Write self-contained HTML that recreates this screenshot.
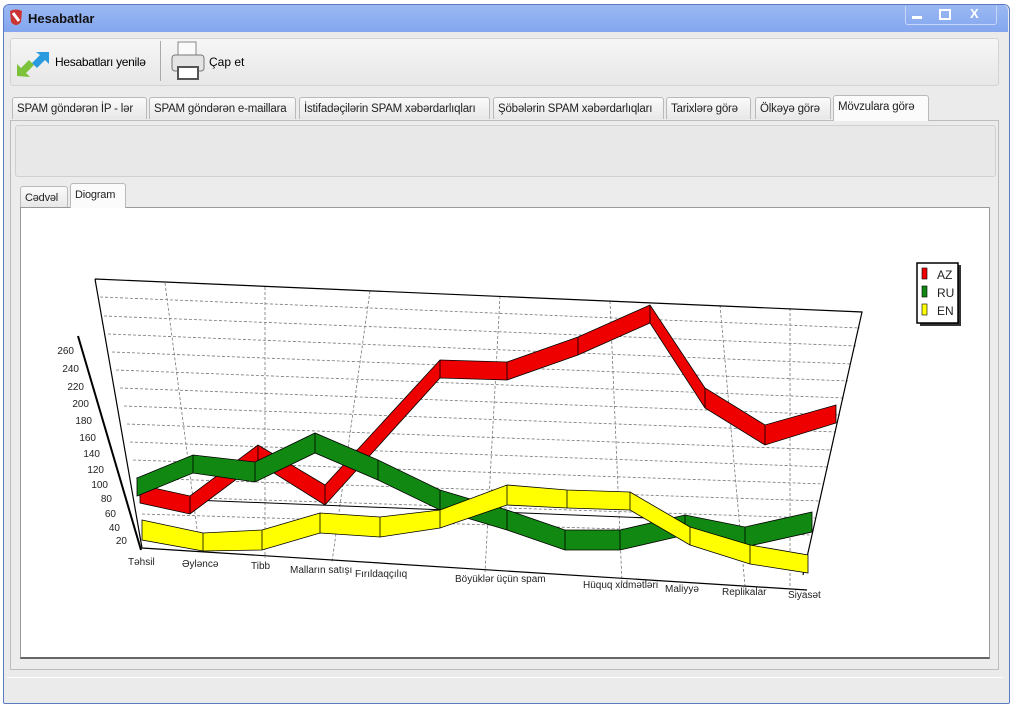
<!DOCTYPE html>
<html><head><meta charset="utf-8"><style>
body{margin:0;width:1026px;height:708px;background:#fff;font-family:"Liberation Sans",sans-serif;position:relative;overflow:hidden}
.abs{position:absolute}
.win{left:3px;top:4px;width:1005px;height:698px;border:1px solid #5a7bc4;border-radius:6px 6px 2px 2px;background:#ebebeb}
.title{left:4px;top:5px;width:1004px;height:27px;background:linear-gradient(#9ab8f3,#84a6ee);border-radius:5px 5px 0 0}
.tab{position:absolute;top:97px;height:22px;border:1px solid #b9b9b9;border-bottom:none;border-radius:3px 3px 0 0;background:linear-gradient(#fafafa,#e8e8e8);font-size:11.5px;line-height:22px;padding:0 4px;color:#222;box-sizing:border-box;white-space:nowrap;overflow:hidden;letter-spacing:-0.2px}
.lbl{font-size:10px;fill:#222;font-family:"Liberation Sans",sans-serif}
</style></head><body>
<div class="abs win"></div>
<div class="abs title"></div>
<svg class="abs" style="left:8px;top:8px" width="16" height="20"><path d="M2 3 Q8 0 14 3 L13 14 Q8 20 3 14Z" fill="#c33"/><path d="M5 5 L11 13" stroke="#fff" stroke-width="3"/></svg>
<div class="abs" style="left:28px;top:11px;font-weight:bold;font-size:13px;color:#111">Hesabatlar</div>
<div class="abs" style="left:905px;top:6px;width:90px;height:18px;border:1px solid #c8d6f5;border-top:none;border-radius:0 0 3px 3px"></div>
<div class="abs" style="left:912px;top:16px;width:10px;height:3px;background:#fff"></div>
<div class="abs" style="left:939px;top:9px;width:8px;height:7px;border:2px solid #fff"></div>
<div class="abs" style="left:970px;top:6px;color:#fff;font-weight:bold;font-size:13px">X</div>
<div class="abs" style="left:10px;top:38px;width:987px;height:46px;border:1px solid #d3d3d3;border-radius:3px;background:linear-gradient(#f6f6f6,#e7e7e7)"></div>
<svg class="abs" style="left:15px;top:50px" width="36" height="30"><path d="M2 26 L2 14 L6 18 L14 10 L19 15 L11 23 L15 27Z" fill="#7cc23a"/><path d="M34 2 L34 14 L30 10 L22 18 L17 13 L25 5 L21 2Z" fill="#2b9be0"/></svg>
<div class="abs" style="left:55px;top:55px;font-size:12px;letter-spacing:-0.3px">Hesabatları yenilə</div>
<div class="abs" style="left:160px;top:41px;width:1px;height:40px;background:#aaa"></div>
<svg class="abs" style="left:170px;top:40px" width="36" height="42"><rect x="8" y="2" width="18" height="14" fill="#fafafa" stroke="#888"/><rect x="2" y="15" width="32" height="16" rx="3" fill="#e4e4e4" stroke="#777"/><rect x="8" y="27" width="20" height="12" fill="#fff" stroke="#555" stroke-width="2"/></svg>
<div class="abs" style="left:209px;top:55px;font-size:12px">Çap et</div>
<div class="tab" style="left:12px;width:135px">SPAM göndərən İP - lər</div>
<div class="tab" style="left:149px;width:147px">SPAM göndərən e-maillara</div>
<div class="tab" style="left:299px;width:191px">İstifadəçilərin SPAM xəbərdarlıqları</div>
<div class="tab" style="left:493px;width:171px">Şöbələrin SPAM xəbərdarlıqları</div>
<div class="tab" style="left:666px;width:85px">Tarixlərə görə</div>
<div class="tab" style="left:755px;width:76px">Ölkəyə görə</div>
<div class="tab" style="left:833px;top:95px;height:26px;width:96px;background:#fbfbfb;z-index:2">Mövzulara görə</div>
<div class="abs" style="left:10px;top:120px;width:987px;height:548px;border:1px solid #bdbdbd;background:#ececec"></div>
<div class="abs" style="left:15px;top:125px;width:979px;height:50px;border:1px solid #d0d0d0;border-radius:3px;background:#e8e8e8"></div>
<div class="tab" style="left:20px;top:186px;height:21px;font-size:11px;width:48px">Cədvəl</div>
<div class="tab" style="left:70px;top:183px;height:25px;font-size:11px;width:56px;background:#fbfbfb;z-index:2">Diogram</div>
<div class="abs" style="left:20px;top:207px;width:968px;height:449px;border:1px solid #999;border-bottom:2px solid #666;background:#fff"></div>
<div class="abs" style="left:7px;top:677px;width:996px;height:1px;background:#fff"></div>
<svg class="abs" style="left:0;top:0" width="1026" height="708">
<g fill="none" stroke="#777" stroke-dasharray="3,2" stroke-width="0.8">
<path d="M100 297 L860 328 M104 316 L856 346 M108 334 L852 364 M112 352 L848 381 M116 370 L844 398 M120 388 L840 415 M124 406 L836 432 M127 424 L832 450 M130 442 L828 467 M133 460 L824 484 M136 478 L820 501 M139 496 L815 518 M142 514 L810 535"/>
<path d="M165 283 L200 552 M265 287 L265 558 M370 291 L332 562 M500 296 L485 572 M610 301 L622 583 M720 305 L745 586 M790 308 L790 588"/>
</g>
<path d="M95 279 L862 312 L803 575 M95 279 L142 548 L807 590" fill="none" stroke="#000" stroke-width="1.2"/>
<path d="M142 498 L700 520" stroke="#000" fill="none"/>
<path d="M78 336 L141 550" stroke="#000" stroke-width="2"/>
<g class="lbl" text-anchor="end">
<text x="74" y="354">260</text><text x="79" y="372">240</text><text x="84" y="390">220</text><text x="89" y="407">200</text><text x="92" y="424">180</text><text x="96" y="441">160</text><text x="100" y="457">140</text><text x="104" y="473">120</text><text x="108" y="488">100</text><text x="112" y="502">80</text><text x="116" y="517">60</text><text x="120" y="531">40</text><text x="127" y="544">20</text>
</g>
<g stroke="#000" stroke-width="0.8">
<polygon fill="#ee0000" points="140,485 190,496 258,445 325,485 440,360 507,362 578,337 650,305 705,388 765,425 836,405 836,423 765,445 705,408 650,323 578,355 507,380 440,378 325,505 258,463 190,514 140,503"/>
<path d="M190 496V514M258 445V463M325 485V505M440 360V378M507 362V380M578 337V355M650 305V323M705 388V408M765 425V445"/>
<polygon fill="#118811" points="137,478 193,455 255,462 315,433 378,460 440,490 507,510 565,530 620,530 685,515 745,527 812,512 812,532 745,547 685,535 620,550 565,550 507,530 440,510 378,480 315,453 255,482 193,473 137,496"/>
<path d="M193 455V473M255 462V482M315 433V453M378 460V480M440 490V510M507 510V530M565 530V550M620 530V550M685 515V535M745 527V547"/>
<polygon fill="#ffff00" points="142,520 203,533 262,530 320,513 380,517 440,510 507,485 567,490 630,492 690,527 750,545 808,555 808,573 750,564 690,545 630,510 567,508 507,505 440,528 380,537 320,533 262,550 203,551 142,540"/>
<path d="M203 533V551M262 530V550M320 513V533M380 517V537M440 510V528M507 485V505M567 490V508M630 492V510M690 527V545M750 545V564"/>
</g>
<g class="lbl">
<text x="128" y="565">Təhsil</text><text x="182" y="567">Əyləncə</text><text x="251" y="569">Tibb</text><text x="290" y="573">Malların satışı</text><text x="355" y="577">Fırıldaqçılıq</text><text x="455" y="582">Böyüklər üçün spam</text><text x="583" y="588">Hüquq xidmətləri</text><text x="665" y="592">Maliyyə</text><text x="722" y="595">Replikalar</text><text x="788" y="598">Siyasət</text>
</g>
<rect x="920" y="265" width="41" height="61" fill="#333"/>
<rect x="917" y="263" width="41" height="60" fill="#fff" stroke="#000" stroke-width="1.5"/>
<rect x="922" y="268" width="5" height="11" fill="#e00" stroke="#000" stroke-width=".6"/>
<rect x="922" y="286" width="5" height="11" fill="#118811" stroke="#000" stroke-width=".6"/>
<rect x="922" y="304" width="5" height="11" fill="#ff0" stroke="#000" stroke-width=".6"/>
<g style="font-size:12px;font-family:'Liberation Sans',sans-serif" fill="#222"><text x="937" y="279">AZ</text><text x="937" y="297">RU</text><text x="937" y="315">EN</text></g>
</svg>
</body></html>
